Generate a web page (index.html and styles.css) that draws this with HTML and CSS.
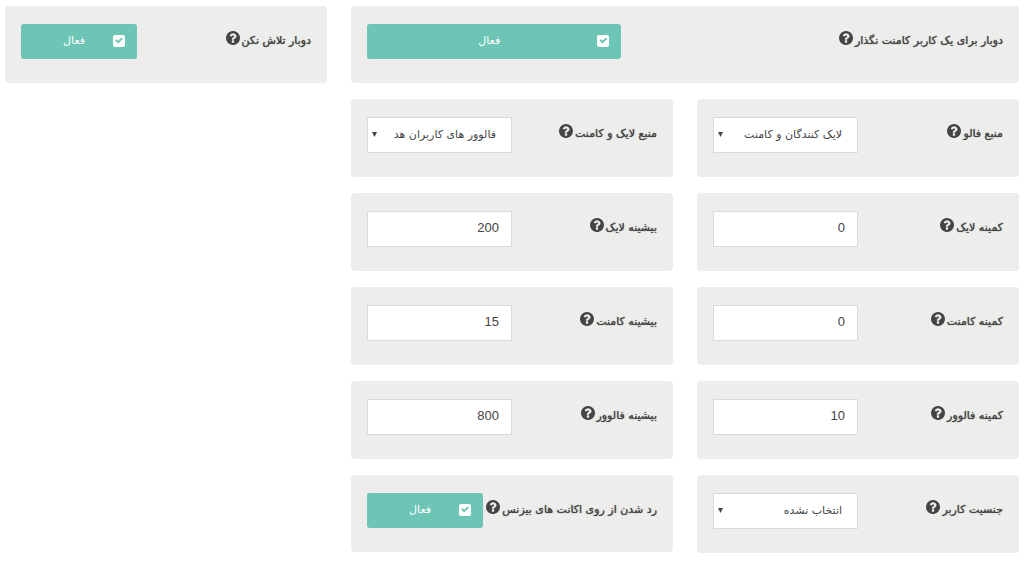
FILE: index.html
```
<!DOCTYPE html>
<html lang="fa" dir="rtl">
<head>
<meta charset="utf-8">
<meta name="viewport" content="width=device-width, initial-scale=1">
<title>تنظیمات</title>
<link rel="stylesheet" href="styles.css">
</head>
<body>
<svg class="sprite" aria-hidden="true">
  <symbol id="help" viewBox="0 0 1536 1536"><path d="M896 1248v-192q0-14-9-23t-23-9h-192q-14 0-23 9t-9 23v192q0 14 9 23t23 9h192q14 0 23-9t9-23zm256-672q0-88-55.500-163t-138.500-116-170-41q-243 0-371 213-15 24 8 42l132 100q7 6 19 6 16 0 25-12 53-68 86-92 34-24 86-24 48 0 85.500 26t37.500 59q0 38-20 61t-68 45q-63 28-115.500 86.500t-52.500 125.500v36q0 14 9 23t23 9h192q14 0 23-9t9-23q0-19 21.500-49.500t54.500-49.500q32-18 49-28.500t46-35 44.500-48 28-60.500 12.500-81zm384 192q0 209-103 385.500t-279.500 279.500-385.500 103-385.500-103-279.500-279.500-103-385.500 103-385.500 279.500-279.500 385.500-103 385.500 103 279.500 279.500 103 385.500z"/></symbol>
</svg>
<form class="settings">
  <div class="card card-wide">
    <label class="name" for="comment-once">دوبار برای یک کاربر کامنت نگذار<svg class="help"><use href="#help"/></svg></label>
    <label class="toggle"><input class="check" type="checkbox" id="comment-once" checked><span class="state">فعال</span></label>
  </div>
  <div class="card">
    <label class="name" for="try-once">دوبار تلاش نکن<svg class="help"><use href="#help"/></svg></label>
    <label class="toggle"><input class="check" type="checkbox" id="try-once" checked><span class="state">فعال</span></label>
  </div>

  <div class="card first">
    <label class="name" for="follow-source">منبع فالو<svg class="help"><use href="#help"/></svg></label>
    <div class="picker"><select class="field" id="follow-source"><option>لایک کنندگان و کامنت</option></select></div>
  </div>
  <div class="card">
    <label class="name" for="like-source">منبع لایک و کامنت<svg class="help"><use href="#help"/></svg></label>
    <div class="picker"><select class="field" id="like-source"><option>فالوور های کاربران هد</option></select></div>
  </div>

  <div class="card first">
    <label class="name" for="like-min">کمینه لایک<svg class="help"><use href="#help"/></svg></label>
    <input class="field number" id="like-min" type="text" value="0">
  </div>
  <div class="card">
    <label class="name" for="like-max">بیشینه لایک<svg class="help"><use href="#help"/></svg></label>
    <input class="field number" id="like-max" type="text" value="200">
  </div>

  <div class="card first">
    <label class="name" for="comment-min">کمینه کامنت<svg class="help"><use href="#help"/></svg></label>
    <input class="field number" id="comment-min" type="text" value="0">
  </div>
  <div class="card">
    <label class="name" for="comment-max">بیشینه کامنت<svg class="help"><use href="#help"/></svg></label>
    <input class="field number" id="comment-max" type="text" value="15">
  </div>

  <div class="card first">
    <label class="name" for="follower-min">کمینه فالوور<svg class="help"><use href="#help"/></svg></label>
    <input class="field number" id="follower-min" type="text" value="10">
  </div>
  <div class="card">
    <label class="name" for="follower-max">بیشینه فالوور<svg class="help"><use href="#help"/></svg></label>
    <input class="field number" id="follower-max" type="text" value="800">
  </div>

  <div class="card first">
    <label class="name" for="gender">جنسیت کاربر<svg class="help"><use href="#help"/></svg></label>
    <div class="picker"><select class="field" id="gender"><option>انتخاب نشده</option></select></div>
  </div>
  <div class="card">
    <label class="name" for="skip-business">رد شدن از روی اکانت های بیزنس<svg class="help"><use href="#help"/></svg></label>
    <label class="toggle"><input class="check" type="checkbox" id="skip-business" checked><span class="state">فعال</span></label>
  </div>
</form>
</body>
</html>
```
FILE: styles.css
```
* {
  box-sizing: border-box;
}

body {
  margin: 0;
  background: #fff;
  color: #444;
  font-family: "DejaVu Sans", sans-serif;
  font-size: 11px;
}

.sprite {
  display: none;
}

.settings {
  display: grid;
  grid-template-columns: repeat(3, minmax(0, 1fr));
  gap: 16px 24px;
  align-items: start;
  padding: 6px 5px 8px;
}

.card {
  display: flex;
  justify-content: space-between;
  padding: 18px 16px 24px;
  border-radius: 4px;
  background: #ededeb;
}

.card-wide {
  grid-column: span 2;
}

.first {
  grid-column-start: 1;
}

.name {
  flex: 1;
  min-width: 0;
  line-height: 34px;
  text-shadow: 0 0 1px #444;
  white-space: nowrap;
}

.help {
  width: 14px;
  height: 14px;
  margin-right: 2px;
  fill: #444;
  vertical-align: -1px;
}

.field {
  width: 100%;
  height: 36px;
  margin: 0;
  padding: 0 15px 2px;
  border: 1px solid #d5d9e2;
  border-radius: 0;
  background: #fff;
  color: #444;
  font-family: inherit;
  font-size: 11px;
  appearance: none;
}

.number {
  width: 50%;
  padding: 0 12px 4px;
  font-family: "Liberation Sans", Arial, sans-serif;
  font-size: 13px;
}

.picker {
  position: relative;
  width: 50%;
}

.picker::after {
  content: "";
  position: absolute;
  left: 5px;
  top: 15px;
  width: 5px;
  height: 5px;
  background: #444;
  clip-path: polygon(0 0, 100% 0, 50% 100%);
  pointer-events: none;
}

.toggle {
  display: flex;
  align-items: center;
  width: 40%;
  height: 35px;
  padding: 0 12px 2px 14px;
  border-radius: 3px;
  background: #6dc5b5;
  color: #fff;
  cursor: pointer;
}

.check {
  display: grid;
  place-items: center;
  width: 12px;
  height: 12px;
  margin: 0;
  border-radius: 2px;
  background: #fff;
  appearance: none;
}

.check:checked::after {
  content: "";
  width: 8px;
  height: 6px;
  background: #6dc5b5;
  clip-path: polygon(0 50%, 17% 28%, 38% 55%, 83% 0, 100% 20%, 38% 100%);
}

.state {
  flex: 1;
  text-align: center;
}
```
